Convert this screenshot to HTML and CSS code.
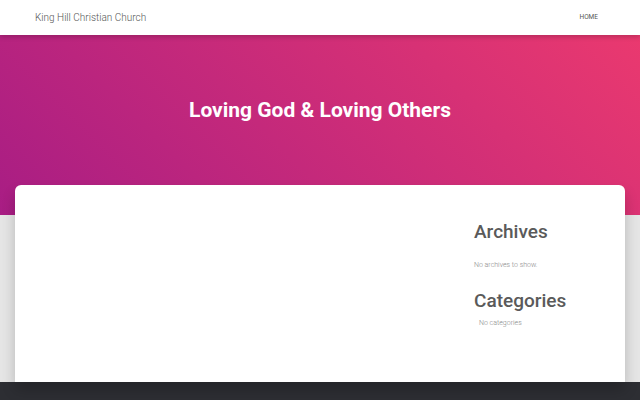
FILE: index.html
```html
<!DOCTYPE html>
<html lang="en">
<head>
    <meta charset="UTF-8">
    <meta name="viewport" content="width=device-width, initial-scale=1.0">
    <title>King Hill Christian Church</title>
    <link rel="stylesheet" href="styles.css">
</head>
<body>
    <nav class="navbar">
        <a class="brand" href="#">King Hill Christian Church</a>
        <ul class="menu">
            <li><a href="#">Home</a></li>
        </ul>
    </nav>

    <header class="hero">
        <h1>Loving God &amp; Loving Others</h1>
    </header>

    <main class="page">
        <div class="card">
            <div class="content"></div>
            <aside class="sidebar">
                <div class="widget">
                    <h4>Archives</h4>
                    <p>No archives to show.</p>
                </div>
                <div class="widget">
                    <h4>Categories</h4>
                    <ul>
                        <li>No categories</li>
                    </ul>
                </div>
            </aside>
        </div>
    </main>

    <footer class="footer"></footer>
</body>
</html>
```
FILE: styles.css
```css
body {
    margin: 0;
    font-family: Roboto, "Liberation Sans", sans-serif;
    background-color: #e5e5e5;
    color: #555;
}
a {
    text-decoration: none;
    color: inherit;
}
.navbar {
    height: 35px;
    display: flex;
    align-items: center;
    justify-content: space-between;
    padding: 0 35px;
    background-color: #fff;
    box-shadow: 0 2px 5px rgba(0, 0, 0, 0.2);
    position: relative;
    z-index: 2;
}
.brand {
    font-size: 10px;
    font-weight: 300;
    color: #555;
}
.menu {
    list-style: none;
    margin: 0;
    padding: 0;
    line-height: 10px;
}
.menu a {
    display: block;
    font-size: 6.5px;
    text-transform: uppercase;
    color: #555;
    margin: 0 7px 1px 0;
}
.hero {
    height: 180px;
    display: flex;
    align-items: center;
    justify-content: center;
    background: linear-gradient(45deg, #a81d84 0%, #ea396f 100%);
}
.hero h1 {
    margin: 0 0 30px;
    font-size: 21px;
    font-weight: 700;
    color: #fff;
}
.page {
    padding: 0 15px;
    margin-top: -30px;
    position: relative;
}
.card {
    display: flex;
    height: 197px;
    background-color: #fff;
    border-radius: 6px 6px 0 0;
    box-shadow: 0 8px 14px rgba(0, 0, 0, 0.2);
}
.content {
    flex: 1;
}
.sidebar {
    width: 128px;
    padding: 33px 23px 0 0;
}
.widget h4 {
    margin: 0;
    font-size: 19px;
    font-weight: 500;
    color: #5a5a5a;
    line-height: 28px;
}
.widget p {
    margin: 15px 0 18px;
    font-size: 7px;
    font-weight: 300;
    color: #888;
}
.widget ul {
    margin: 4px 0 0;
    padding-left: 5px;
    list-style: none;
    font-size: 7px;
    font-weight: 300;
    color: #888;
}
.footer {
    height: 30px;
    background-color: #2d2e33;
}
```
